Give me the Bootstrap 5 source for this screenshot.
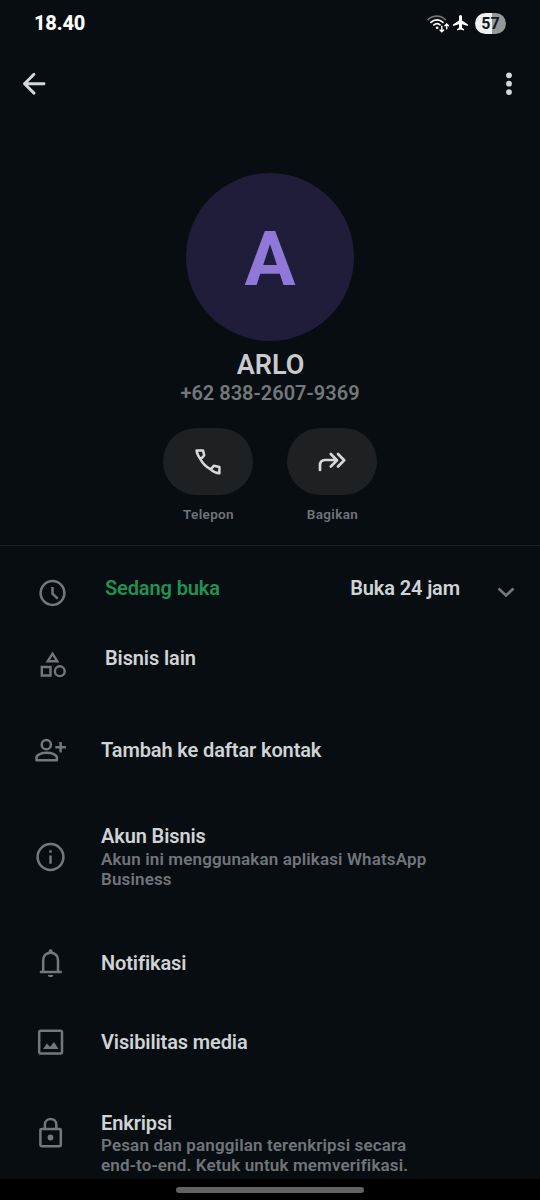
<!DOCTYPE html>
<html lang="id">
<head>
<meta charset="utf-8">
<meta name="viewport" content="width=device-width, initial-scale=1">
<title>Info kontak</title>
<link href="https://cdn.jsdelivr.net/npm/bootstrap@5.3.0/dist/css/bootstrap.min.css" rel="stylesheet">
<style>
body{background:#080d11;color:#d0d3d6;font-family:Roboto,"Liberation Sans",sans-serif;font-weight:600;overflow:hidden}
.screen{width:540px;height:1200px}
svg{display:block;overflow:visible;flex:none}
.status{height:46px;padding:0 34px;color:#fff}
.clock{font-size:20px;letter-spacing:-.2px;font-weight:800}
.battery{width:31px;height:21px;margin-left:7px;font-size:16px;line-height:21px;font-weight:700;color:#15191c;background:linear-gradient(90deg,#eef0f1 56%,#96989a 56%)}
.topbar{height:76px;padding:0 22px}
.avatar{width:168px;height:168px;margin-top:51px;padding-top:3px;background:#1f1d39;color:#8f78d8;font-size:76px;font-weight:700;line-height:1}
.name{font-size:27px;line-height:30px;margin-top:9px;padding-left:1px;color:#c8cbcd}
.phone{font-size:20px;line-height:24px;margin-top:1px;color:#73787b}
.actions{gap:34px;margin-top:23px}
.pill{width:90px;height:67px;border-radius:34px;background:#1d2124;color:#d6d8da}
.pill-label{font-size:13.5px;line-height:16px;margin-top:11px;padding-left:1px;letter-spacing:.35px;color:#70757a}
.rule{height:1px;background:#1b2024;margin-top:23px}
.item{padding-left:32px;font-size:20px;letter-spacing:-.12px;line-height:24px}
.item>svg{color:#73787c;margin-right:33px}
.item>.chevron{margin-left:37px;margin-right:25px}
.shift{margin-left:4px}
.h-hours{height:84px}.h-biz{height:56px}.h-add{height:128px}.h-acct{height:86px}
.h-notif{height:126px}.h-media{height:32px}.h-enc{height:121px}
.item-title{margin-top:-1px;margin-bottom:1px}
.sub{font-size:17px;line-height:20px;letter-spacing:.14px;color:#70757a}
.open{color:#1f9352}
.navarea{height:21px;background:#000}
.handle{width:188px;height:6px;background:#626262}
</style>
</head>
<body>
<main class="screen d-flex flex-column">
  <header class="status d-flex align-items-center justify-content-between">
    <span class="clock">18.40</span>
    <div class="d-flex align-items-center">
      <svg width="21" height="18" viewBox="0 0 23 20" fill="none" stroke="#fff" stroke-width="1.9" stroke-linecap="round">
        <path d="M0 6.200c5-5.200 14.200-5.200 19 0" stroke="#6f7376"/><path d="M3 9.300c3.800-3.800 9.800-3.800 13.500-.1M6.400 12.200c2-1.800 4.800-1.800 6.800-.2"/><circle cx="10" cy="15.300" r="1.500" fill="#fff" stroke="none"/>
        <path d="M15.200 13.500v6m-2-1.800 2 2 2-2M20.600 16.500v-5.400m-2 1.900 2-2 2 2" stroke-width="1.600"/>
      </svg>
      <svg class="ms-1" width="15" height="16" viewBox="0 0 15 16" fill="#fff"><path d="M7.500 0C8.400 0 9 .8 9 1.700v3.700l6 4v1.700L9 9.200v3.500l2 1.500v1.300l-3.500-1-3.500 1v-1.300l2-1.500V9.200L0 11.100V9.400l6-4V1.700C6 .8 6.600 0 7.500 0z"/></svg>
      <span class="battery rounded-pill text-center me-n1">57</span>
    </div>
  </header>
  <nav class="topbar d-flex align-items-center justify-content-between">
    <svg width="24" height="24" viewBox="0 0 24 24" fill="none" stroke="#d5d8da" stroke-width="2.900" stroke-linecap="round" stroke-linejoin="round"><path d="M22 11.700H2.500M12 2.300 2.500 11.700l9.500 9.400"/></svg>
    <svg width="18" height="24" viewBox="0 0 18 24" fill="#d5d8da"><circle cx="9" cy="3.300" r="2.900"/><circle cx="9" cy="11.700" r="2.900"/><circle cx="9" cy="20.100" r="2.900"/></svg>
  </nav>
  <section class="d-flex flex-column align-items-center">
    <div class="avatar rounded-circle d-flex align-items-center justify-content-center">A</div>
    <div class="name">ARLO</div>
    <div class="phone">+62 838-2607-9369</div>
    <div class="actions d-flex">
      <div class="text-center">
        <div class="pill d-flex align-items-center justify-content-center">
          <svg width="26" height="26" viewBox="0 0 26 26" fill="none" stroke="currentColor" stroke-width="2.500" stroke-linejoin="round"><path d="M1.600 1.400h6.400l1.200 5-3.700 3.900C3.400 7.300 1.700 4.400 1.600 1.400zM5.500 10.300c2.300 4.200 5.600 7.500 10.100 10l3.200-3.500 5.600 1.100v6.300c-3.100-.1-6-1.200-8.800-3.900"/></svg>
        </div>
        <div class="pill-label">Telepon</div>
      </div>
      <div class="text-center">
        <div class="pill d-flex align-items-center justify-content-center">
          <svg width="28" height="20" viewBox="0 0 28 20" fill="none" stroke="currentColor" stroke-width="2.700" stroke-linecap="round" stroke-linejoin="round"><path d="M2 18v-4.500c0-3.500 1.800-5.500 5.200-5.500h11M12.800 2 19 8.300l-6.200 6.200M20 2l6.200 6.300-6.200 6.200"/></svg>
        </div>
        <div class="pill-label">Bagikan</div>
      </div>
    </div>
  </section>
  <div class="rule"></div>
  <section>
    <div class="item h-hours d-flex align-items-center">
      <svg width="36" height="36" viewBox="0 0 36 36" fill="none" stroke="currentColor" stroke-width="2.500"><circle cx="20.500" cy="23" r="11.900"/><path d="M20.500 17v6.600l5.200 5"/></svg>
      <span class="open shift">Sedang buka</span>
      <span class="ms-auto">Buka 24 jam</span>
      <svg class="chevron" width="18" height="24" viewBox="0 0 18 24" fill="none" stroke="currentColor" stroke-width="2.600"><path d="m1.500 12.500 7.500 7 7.500-7"/></svg>
    </div>
    <div class="item h-biz d-flex align-items-center">
      <svg width="36" height="36" viewBox="0 0 36 36" fill="none" stroke="currentColor" stroke-width="2.400"><path d="m20.500 13.700 4.800 7.600h-9.600zM9.800 27h8.700v8.500H9.800z"/><circle cx="27.800" cy="31.200" r="4.900"/></svg>
      <span class="shift">Bisnis lain</span>
    </div>
    <div class="item h-add d-flex align-items-center">
      <svg width="36" height="36" viewBox="0 0 36 36" fill="none" stroke="currentColor" stroke-width="2.500"><circle cx="14.300" cy="12.700" r="4.600"/><path d="M4.500 28.200v-2.400c0-3 5-5 10.200-5s10.200 2 10.200 5v2.400zM28.600 9.900v10.600M23.300 15.200h10.600" stroke-linejoin="round"/></svg>
      <span>Tambah ke daftar kontak</span>
    </div>
    <div class="item h-acct d-flex align-items-center">
      <svg width="36" height="36" viewBox="0 0 36 36" fill="none" stroke="currentColor" stroke-width="2.500"><circle cx="18.500" cy="18" r="12.900"/><path d="M18.500 16.500v8.300M18.500 11.200v2.600"/></svg>
      <div><div class="item-title">Akun Bisnis</div><div class="sub">Akun ini menggunakan aplikasi WhatsApp<br>Business</div></div>
    </div>
    <div class="item h-notif d-flex align-items-center">
      <svg width="36" height="36" viewBox="0 0 36 36" fill="none" stroke="currentColor" stroke-width="2.500"><path d="M7.800 27h22M11.200 27V15c0-9.700 14.800-9.700 14.800 0v12"/><path d="M16.600 8V6.200a2 2 0 0 1 4 0V8zM15.800 30h5.600c-.5 3-5.100 3-5.600 0z" fill="currentColor" stroke="none"/></svg>
      <span>Notifikasi</span>
    </div>
    <div class="item h-media d-flex align-items-center">
      <svg width="36" height="36" viewBox="0 0 36 36" fill="none" stroke="currentColor" stroke-width="2.500"><rect x="7.200" y="6.800" width="22.800" height="22.800" rx="1.500"/><path d="m11 25 4-5.500 3 3.500 4-5 4.500 7z" fill="currentColor" stroke="none"/></svg>
      <span>Visibilitas media</span>
    </div>
    <div class="item h-enc d-flex align-items-end pb-1">
      <svg class="mb-4" width="36" height="36" viewBox="0 0 36 36" fill="none" stroke="currentColor" stroke-width="2.500"><rect x="8.400" y="13.900" width="20.400" height="17.400" rx="1.200"/><path d="M12.900 13.900V9.600c0-7.400 11.400-7.400 11.400 0v4.300"/><circle cx="18.500" cy="22.500" r="2.900" fill="currentColor" stroke="none"/></svg>
      <div>Enkripsi<div class="sub">Pesan dan panggilan terenkripsi secara<br>end-to-end. Ketuk untuk memverifikasi.</div></div>
    </div>
  </section>
  <footer class="navarea d-flex align-items-center justify-content-center mt-auto"><div class="handle rounded-pill"></div></footer>
</main>
<script src="https://cdn.jsdelivr.net/npm/bootstrap@5.3.0/dist/js/bootstrap.bundle.min.js"></script>
</body>
</html>
